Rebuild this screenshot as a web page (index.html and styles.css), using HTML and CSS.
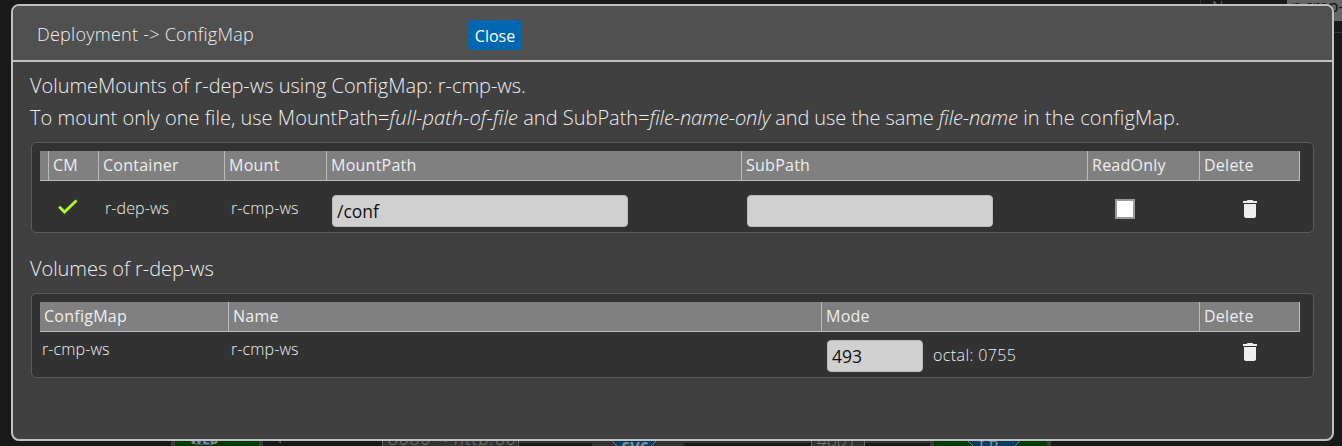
FILE: index.html
```
<!DOCTYPE html>
<html lang="en">
<head>
<meta charset="utf-8">
<title>Deployment -&gt; ConfigMap</title>
<link rel="stylesheet" href="styles.css">
</head>
<body>
<div class="canvas" aria-hidden="true">
  <div class="side-label">Name</div>
  <div class="side-input">r-cmp-ws</div>
  <div class="side-line"></div>
  <div class="node node-web"><svg width="32" height="20" viewBox="0 0 32 20"><path d="M8 0H24L31 10 24 20H8L1 10Z" fill="#033d63" stroke="#777"/></svg><b>WEB</b></div>
  <div class="arrow arrow-a"></div>
  <div class="port port-http">8080 &lt; http:80</div>
  <div class="wire wire-a"></div>
  <div class="svc"><svg width="48" height="12" viewBox="0 0 48 12"><path d="M0 0H48L36 12H12Z" fill="#033d63" stroke="#777"/></svg><b>svc</b></div>
  <div class="wire wire-b"></div>
  <div class="port port-num">4001</div>
  <div class="wire wire-c"></div>
  <div class="node node-lb"><svg width="56" height="14" viewBox="0 0 56 14"><path d="M0 0H56L42 14H14Z" fill="#033d63" stroke="#777"/></svg><b>LB</b></div>
</div>
<main class="dialog">
  <header class="dialog-head">
    <span class="dialog-title">Deployment -&gt; ConfigMap</span>
    <button class="close">Close</button>
  </header>
  <section class="dialog-body">
    <p class="intro tight">VolumeMounts of r-dep-ws using ConfigMap: r-cmp-ws.</p>
    <p class="intro"><span class="lead">To mount only one file, use MountPath=</span><i class="wide">full-path-of-file</i> and SubPath=<i class="narrow">file-name-only</i><span class="narrow"> and use the same </span><i class="narrow">file-name</i><span class="wide"> in the configMap.</span></p>
    <div class="panel mounts">
      <div class="cols cols-mounts head"><span></span><span>CM</span><span>Container</span><span>Mount</span><span>MountPath</span><span>SubPath</span><span>ReadOnly</span><span>Delete</span></div>
      <div class="cols cols-mounts row">
        <span></span>
        <span class="check"><svg width="20" height="16" viewBox="0 0 20 16"><path d="M1.2 7.8L6.5 13 18.5 1.5" fill="none" stroke="#adff2f" stroke-width="2.8"/></svg></span>
        <span class="cell">r-dep-ws</span>
        <span class="cell">r-cmp-ws</span>
        <span class="field"><input class="in-path" value="/conf"></span>
        <span class="field"><input class="in-sub" value=""></span>
        <span class="tick"><span class="box"></span></span>
        <span class="trash"><svg width="14" height="18" viewBox="5 3 14 18"><path d="M6 19c0 1.1.9 2 2 2h8c1.1 0 2-.9 2-2V7H6v12zM19 4h-3.500l-1-1h-5l-1 1H5v2h14V4z" fill="#eee"/></svg></span>
      </div>
    </div>
    <h2 class="sub">Volumes of r-dep-ws</h2>
    <div class="panel volumes">
      <div class="cols cols-volumes head"><span>ConfigMap</span><span>Name</span><span>Mode</span><span>Delete</span></div>
      <div class="cols cols-volumes row">
        <span class="cell">r-cmp-ws</span>
        <span class="cell">r-cmp-ws</span>
        <span class="field"><input class="in-mode" value="493"><span class="octal">octal: 0755</span></span>
        <span class="trash"><svg width="14" height="18" viewBox="5 3 14 18"><path d="M6 19c0 1.1.9 2 2 2h8c1.1 0 2-.9 2-2V7H6v12zM19 4h-3.500l-1-1h-5l-1 1H5v2h14V4z" fill="#eee"/></svg></span>
      </div>
    </div>
  </section>
</main>
</body>
</html>
```
FILE: styles.css
```
* { box-sizing: border-box; }
body {
  margin: 0;
  width: 1342px;
  height: 446px;
  overflow: hidden;
  position: relative;
  background: #191919;
  color: #eee;
  font-family: "Open Sans", "Noto Sans", sans-serif;
  font-weight: 300;
  padding: 4px 8px 0 11px;
}
p, h2 { margin: 0; font-weight: 300; white-space: pre; }

/* dimmed diagram behind the dialog */
.canvas { position: absolute; inset: 0; overflow: hidden; color: #888; }
.canvas > * { position: absolute; }
.side-label { left: 1200px; top: -4px; padding-left: 11px; height: 30px; border-left: 1px solid #333; font-size: 16px; line-height: 22px; color: #777; }
.side-input { left: 1287px; top: -12px; width: 80px; height: 33px; background: #666; color: #111; font-size: 17px; font-weight: 400; line-height: 35px; padding-left: 5px; white-space: nowrap; }
.side-line { left: 1200px; top: 32px; width: 142px; height: 1px; background: #333; }
.node { top: 430px; height: 30px; background: #003c00; border: 4px solid #3a3a3a; border-top: 0; }
.node b, .svc b { position: absolute; left: 0; right: 0; text-align: center; font-size: 13px; line-height: 14px; font-weight: 700; color: #888; }
.node svg, .svc svg { position: absolute; }
.node-web { left: 171px; width: 92px; }
.node-web svg { left: 13px; top: -5px; }
.node-web b { top: 2px; left: -26px; }
.node-lb { left: 930px; width: 121px; }
.node-lb svg { left: 32px; top: 9px; width: 56px; height: 14px; }
.node-lb b { top: 10px; left: -3px; font-family: "Liberation Serif", serif; font-size: 16px; font-weight: 400; }
.arrow { width: 0; height: 0; border: 4px solid transparent; border-right-color: #555; }
.arrow-a { left: 273px; top: 436px; }
.port { top: 426px; height: 30px; background: #333; border: 1px solid #666; color: #777; font-style: italic; font-size: 18px; line-height: 23px; letter-spacing: 1px; white-space: nowrap; overflow: hidden; }
.port-http { left: 382px; width: 137px; padding-left: 5px; }
.port-num { left: 811px; width: 54px; padding-left: 5px; line-height: 27px; letter-spacing: 0; }
.wire { top: 441px; height: 2px; background: #333; }
.wire-a { left: 519px; width: 73px; }
.wire-b { left: 684px; width: 127px; }
.wire-c { left: 865px; width: 65px; }
.svc { left: 592px; top: 436px; width: 92px; height: 20px; background: #333; }
.svc svg { left: 18px; top: 3px; }
.svc b { top: 3px; left: -6px; font-size: 17px; }

.dialog {
  position: relative;
  width: 1323px;
  height: 437px;
  border: 2px solid #c0c0c0;
  border-radius: 8px;
  background: #404040;
  overflow: hidden;
}
.dialog-head { display: flex; align-items: flex-start; height: 56px; padding: 14px 0 0 24px; background: #505050; border-bottom: 2px solid #c0c0c0; }
.dialog-title { width: 431px; font-size: 18px; line-height: 28px; letter-spacing: 0.26px; white-space: nowrap; }
.close { width: 54px; height: 30px; padding: 1px 0 0; border: 0; border-radius: 4px; background: #0067b0; color: #fff; font: 400 16px "Open Sans", sans-serif; }
.dialog-body { padding: 8px 18px 0; }
.intro { font-size: 20px; line-height: 32px; margin-left: -1px; }
.tight { letter-spacing: -0.03px; }
.lead { letter-spacing: 0.02px; }
.wide { letter-spacing: 0.12px; }
.narrow { letter-spacing: -0.11px; }
.panel { border: 1px solid #5c5c5c; border-radius: 5px; background: #323232; padding: 8px 13px 0 8px; width: 1283px; }
.mounts { margin-top: 8px; height: 91px; }
.volumes { height: 85px; }
.sub { font-size: 20px; line-height: 32px; margin: 20px 0 8px -1px; letter-spacing: -0.06px; }
.cols { display: grid; width: 1260px; }
.cols-mounts { grid-template-columns: 9px 50px 126px 102px 415px 346px 112px 100px; }
.cols-volumes { grid-template-columns: 189px 593px 378px 100px; }
.head { height: 30px; background: #808080; border-bottom: 1px solid #bbb; }
.head span { border-right: 1px solid #bbb; padding-left: 4px; font-size: 16px; font-weight: 400; line-height: 28px; letter-spacing: 0.25px; white-space: nowrap; }
.row { white-space: nowrap; }
.cell { font-size: 16px; line-height: 24px; padding: 15px 0 0 6px; letter-spacing: 0.1px; }
.volumes .cell { padding: 5px 0 0 2px; }
.check { padding: 17px 0 0 9px; }
.field { display: flex; padding: 14px 0 0 5px; }
.volumes .field { padding-top: 8px; }
input { height: 32px; padding: 0 4px 1px; border: 1px solid #bbb; border-radius: 4px; background: #d0d0d0; color: #111; font: 400 17.5px "Open Sans", sans-serif; outline: 0; }
.in-path { width: 296px; }
.in-sub { width: 246px; }
.in-mode { width: 96px; }
.octal { margin-left: 10px; font-size: 16px; line-height: 30px; letter-spacing: 0.4px; }
.tick { padding: 18px 0 0 27px; }
.box { display: block; width: 20px; height: 20px; border: 2px solid #999; background: #fff; }
.trash { padding: 19px 0 0 43px; }
.volumes .trash { padding-top: 11px; }
```
